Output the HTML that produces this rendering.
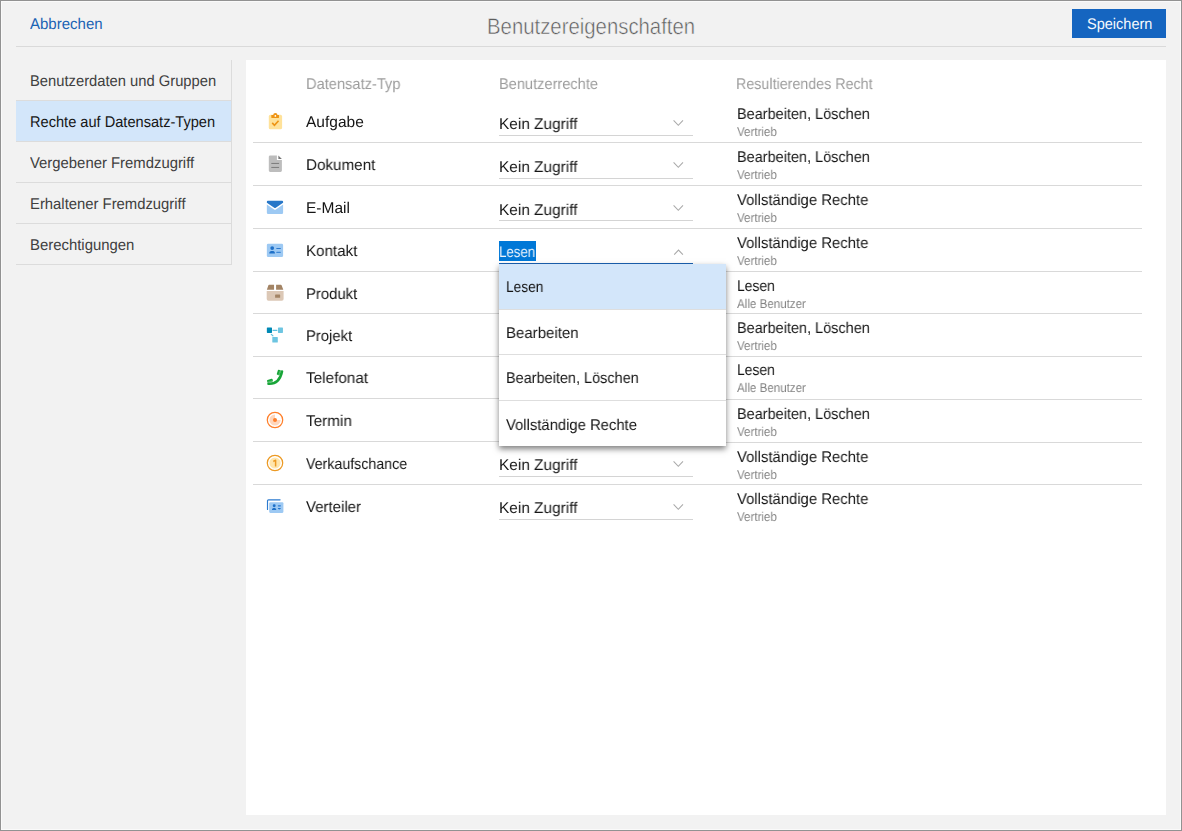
<!DOCTYPE html>
<html lang="de"><head><meta charset="utf-8"><title>Benutzereigenschaften</title><style>
html,body{margin:0;padding:0}
body{width:1182px;height:831px;overflow:hidden;background:#f2f2f2;font-family:"Liberation Sans",sans-serif;position:relative;color:#1f1f1f}
.frame{position:absolute;left:0;top:0;width:1182px;height:831px;box-shadow:inset 0 0 0 1px #929292,inset 0 0 0 2px #fafafa}
.a{position:absolute;white-space:nowrap;line-height:1}
.t{transform-origin:0 0;text-rendering:geometricPrecision}
.g{will-change:transform}
.hr{position:absolute;height:1px;background:#d9d9d9}
.navbg{position:absolute;left:16px;width:215px;height:1px;background:#dcdcdc}
.panel{position:absolute;left:246px;top:60px;width:920px;height:755px;background:#fff}
.btn{position:absolute;left:1072px;top:9px;width:94px;height:29px;background:#1565c0}
.ul{position:absolute;left:499px;width:194px;height:1px;background:#d4d4d4}
.pop{position:absolute;left:499px;top:264px;width:227px;height:182px;background:#fff;box-shadow:0 3px 6px rgba(0,0,0,.5)}
.ic{position:absolute;left:263px;width:24px;height:24px}
svg{display:block}
h1{margin:0;font-weight:normal}
</style></head><body>
<div class="frame"></div>
<header>
<span class="a t" style="left:30.20px;top:17.00px;font-size:15.5px;color:#1b63b4;transform:scaleX(0.9686);">Abbrechen</span>
<h1 class="a t" style="left:486.77px;top:16.00px;font-size:22.6px;color:#5e5e5e;transform:scaleX(0.9005);-webkit-text-stroke:0.5px #f2f2f2;">Benutzereigenschaften</h1>
<div class="btn"></div><span class="a t" style="left:1086.75px;top:17.00px;font-size:15.4px;color:#f6f9fd;transform:scaleX(0.9437);">Speichern</span>
<div class="hr" style="left:16px;top:46px;width:1150px;background:#dadada"></div>
</header>
<nav>
<div class="a" style="left:16px;top:101px;width:215px;height:40px;background:#d3e6fa"></div>
<div class="navbg" style="top:100px"></div>
<div class="navbg" style="top:141px"></div>
<div class="navbg" style="top:182px"></div>
<div class="navbg" style="top:223px"></div>
<div class="navbg" style="top:264px"></div>
<div class="a" style="left:231px;top:60px;width:1px;height:205px;background:#dcdcdc"></div>
<div class="a t" style="left:29.62px;top:74.00px;font-size:15.5px;color:#404040;transform:scaleX(0.9518);">Benutzerdaten und Gruppen</div>
<div class="a t" style="left:29.63px;top:115.00px;font-size:15.5px;color:#161616;transform:scaleX(0.9421);">Rechte auf Datensatz-Typen</div>
<div class="a t" style="left:30.00px;top:156.00px;font-size:15.5px;color:#404040;transform:scaleX(0.9591);">Vergebener Fremdzugriff</div>
<div class="a t" style="left:29.61px;top:197.00px;font-size:15.5px;color:#404040;transform:scaleX(0.9571);">Erhaltener Fremdzugriff</div>
<div class="a t" style="left:29.61px;top:238.00px;font-size:15.5px;color:#404040;transform:scaleX(0.9615);">Berechtigungen</div>
</nav>
<main>
<div class="panel"></div>
<div class="thead"><div class="a t g" style="left:306.43px;top:77.00px;font-size:15.5px;color:#9d9d9d;transform:scaleX(0.9454);">Datensatz-Typ</div><div class="a t g" style="left:498.53px;top:77.00px;font-size:15.5px;color:#9d9d9d;transform:scaleX(0.9415);">Benutzerrechte</div><div class="a t g" style="left:736.46px;top:77.00px;font-size:15.5px;color:#9d9d9d;transform:scaleX(0.9210);">Resultierendes Recht</div></div>
<section class="row">
<svg class="a" style="left:263px;top:109px" width="26" height="26" viewBox="0 0 26 26"><rect x="5.8" y="5.8" width="13.3" height="14.5" rx="1.6" fill="#ffe29a"/><path d="M8.3 5.9h7.7v2.6a.4.4 0 0 1-.4.4H8.7a.4.4 0 0 1-.4-.4z" fill="#ee9414"/><path d="M10.2 6.2a2.15 2.15 0 0 1 4.3 0z" fill="#ee9414"/><circle cx="12.35" cy="6.9" r="0.85" fill="#fff"/><path d="M9.2 13.9l2.25 2.35 4.1-4.45" fill="none" stroke="#ee9414" stroke-width="1.6"/></svg>
<div class="ul" style="top:135px"></div>
<svg class="a" style="left:672px;top:119px" width="13" height="9" viewBox="0 0 13 9"><path d="M1.6 1.4 L6.3 6.3 L11 1.4" fill="none" stroke="#a9a9a9" stroke-width="1.05"/></svg>
<div class="a t g" style="left:306.00px;top:115.00px;font-size:15.5px;color:#151515;transform:scaleX(0.9928);">Aufgabe</div>
<div class="a t g" style="left:498.97px;top:117.00px;font-size:15.5px;color:#151515;transform:scaleX(0.9927);">Kein Zugriff</div>
<div class="a t g" style="left:736.54px;top:107.00px;font-size:15.5px;color:#151515;transform:scaleX(0.9343);">Bearbeiten, Löschen</div>
<div class="a t g" style="left:737.00px;top:126.00px;font-size:12.8px;color:#858585;transform:scaleX(0.9040);">Vertrieb</div>
<div class="hr" style="left:253px;top:142px;width:889px"></div>
</section>
<section class="row">
<svg class="a" style="left:263px;top:151px" width="26" height="26" viewBox="0 0 26 26"><path d="M7.2 4.4h6.7v4.7h5v10.5a1.4 1.4 0 0 1-1.4 1.4H7.2a1.4 1.4 0 0 1-1.4-1.4V5.8a1.4 1.4 0 0 1 1.4-1.4z" fill="#bdbdbd"/><path d="M15.4 4.6l3.5 3.4h-3.5z" fill="#767676"/><path d="M8.3 12.45h7.8M8.3 16.45h7.8" stroke="#7c7c7c" stroke-width="1" fill="none"/></svg>
<div class="ul" style="top:178px"></div>
<svg class="a" style="left:672px;top:161px" width="13" height="9" viewBox="0 0 13 9"><path d="M1.6 1.4 L6.3 6.3 L11 1.4" fill="none" stroke="#a9a9a9" stroke-width="1.05"/></svg>
<div class="a t g" style="left:305.58px;top:158.00px;font-size:15.5px;color:#151515;transform:scaleX(0.9818);">Dokument</div>
<div class="a t g" style="left:498.97px;top:160.00px;font-size:15.5px;color:#151515;transform:scaleX(0.9927);">Kein Zugriff</div>
<div class="a t g" style="left:736.54px;top:150.00px;font-size:15.5px;color:#151515;transform:scaleX(0.9343);">Bearbeiten, Löschen</div>
<div class="a t g" style="left:737.00px;top:169.00px;font-size:12.8px;color:#858585;transform:scaleX(0.9040);">Vertrieb</div>
<div class="hr" style="left:253px;top:185px;width:889px"></div>
</section>
<section class="row">
<svg class="a" style="left:262px;top:194px" width="26" height="26" viewBox="0 0 26 26"><path d="M4.85 10.4l7.3 5.2a1.5 1.5 0 0 0 1.7 0l7.25-5.2v8.3a1.3 1.3 0 0 1-1.3 1.3H6.15a1.3 1.3 0 0 1-1.3-1.3z" fill="#9dc9f3"/><path d="M5.9 6.7h14.2a1 1 0 0 1 1 1v1.1l-7.3 5a1.4 1.4 0 0 1-1.6 0l-7.35-5V7.7a1 1 0 0 1 1.05-1z" fill="#2777c8"/></svg>
<div class="ul" style="top:220px"></div>
<svg class="a" style="left:672px;top:204px" width="13" height="9" viewBox="0 0 13 9"><path d="M1.6 1.4 L6.3 6.3 L11 1.4" fill="none" stroke="#a9a9a9" stroke-width="1.05"/></svg>
<div class="a t g" style="left:305.57px;top:201.00px;font-size:15.5px;color:#151515;transform:scaleX(0.9948);">E-Mail</div>
<div class="a t g" style="left:498.97px;top:203.00px;font-size:15.5px;color:#151515;transform:scaleX(0.9927);">Kein Zugriff</div>
<div class="a t g" style="left:736.90px;top:193.00px;font-size:15.5px;color:#151515;transform:scaleX(0.9584);">Vollständige Rechte</div>
<div class="a t g" style="left:737.00px;top:212.00px;font-size:12.8px;color:#858585;transform:scaleX(0.9040);">Vertrieb</div>
<div class="hr" style="left:253px;top:228px;width:889px"></div>
</section>
<section class="row">
<svg class="a" style="left:262px;top:237px" width="26" height="26" viewBox="0 0 26 26"><rect x="4.85" y="6.7" width="16.25" height="13.3" rx="1.3" fill="#9dc9f3"/><circle cx="10.2" cy="11.1" r="1.9" fill="#1e70c8"/><path d="M7.3 16.4v-.5c0-1.3 1.3-1.9 2.9-1.9s2.7.6 2.7 1.9v.5z" fill="#1e70c8"/><path d="M14.8 11.5h3.5" stroke="#2a78ce" stroke-width="1.15" stroke-linecap="round" fill="none"/><path d="M14.8 15.3h3.5" stroke="#3f88d7" stroke-width="1.25" stroke-linecap="round" fill="none"/></svg>
<div class="a" style="left:499px;top:241px;width:37px;height:20px;background:#0078d7"></div>
<div class="ul" style="top:263px;height:2px;background:#1b63b4"></div>
<svg class="a" style="left:672px;top:248px" width="13" height="9" viewBox="0 0 13 9"><path d="M2.2 6.7 L6.5 2.1 L10.9 6.7" fill="none" stroke="#a9a9a9" stroke-width="1.05"/></svg>
<div class="a t g" style="left:305.59px;top:244.00px;font-size:15.5px;color:#151515;transform:scaleX(0.9770);">Kontakt</div>
<div class="a t g" style="left:499.23px;top:245.00px;font-size:15.4px;color:#eef4fb;transform:scaleX(0.8646);">Lesen</div>
<div class="a t g" style="left:736.90px;top:236.00px;font-size:15.5px;color:#151515;transform:scaleX(0.9584);">Vollständige Rechte</div>
<div class="a t g" style="left:737.00px;top:255.00px;font-size:12.8px;color:#858585;transform:scaleX(0.9040);">Vertrieb</div>
<div class="hr" style="left:253px;top:271px;width:889px"></div>
</section>
<section class="row">
<svg class="a" style="left:262px;top:280px" width="26" height="26" viewBox="0 0 26 26"><path d="M7.1 4.7h4.95v5.15h-7.2l1.55-4.6a.8.8 0 0 1 .7-.55z" fill="#a38465"/><path d="M14.1 4.7h4.8a.8.8 0 0 1 .7.55l1.7 4.6h-7.2z" fill="#a38465"/><path d="M4.7 10.95h16.9v8.1a1.75 1.75 0 0 1-1.75 1.75H6.45a1.75 1.75 0 0 1-1.75-1.75z" fill="#dcc8b6"/><rect x="13.1" y="14.55" width="5.05" height="3.25" rx=".4" fill="#a38465"/></svg>
<div class="a t g" style="left:305.61px;top:287.00px;font-size:15.5px;color:#151515;transform:scaleX(0.9610);">Produkt</div>
<div class="a t g" style="left:736.59px;top:279.00px;font-size:15.5px;color:#151515;transform:scaleX(0.8965);">Lesen</div>
<div class="a t g" style="left:737.00px;top:298.00px;font-size:12.8px;color:#858585;transform:scaleX(0.9057);">Alle Benutzer</div>
<div class="hr" style="left:253px;top:313px;width:889px"></div>
</section>
<section class="row">
<svg class="a" style="left:262px;top:322px" width="26" height="26" viewBox="0 0 26 26"><rect x="4.85" y="5.5" width="5.15" height="5.45" rx=".6" fill="#0089b5"/><rect x="15.95" y="5.5" width="5" height="5.45" rx=".6" fill="#6dc5e1"/><rect x="10.3" y="15" width="5.5" height="5.5" rx=".6" fill="#6dc5e1"/><path d="M11 8.3h3.9M9.3 12.4l1.6 1.4" stroke="#5fbfdd" stroke-width="1.15" stroke-linecap="round" fill="none"/></svg>
<div class="a t g" style="left:305.61px;top:329.00px;font-size:15.5px;color:#151515;transform:scaleX(0.9562);">Projekt</div>
<div class="a t g" style="left:736.54px;top:321.00px;font-size:15.5px;color:#151515;transform:scaleX(0.9343);">Bearbeiten, Löschen</div>
<div class="a t g" style="left:737.00px;top:340.00px;font-size:12.8px;color:#858585;transform:scaleX(0.9040);">Vertrieb</div>
<div class="hr" style="left:253px;top:356px;width:889px"></div>
</section>
<section class="row">
<svg class="a" style="left:262px;top:365px" width="26" height="26" viewBox="0 0 26 26"><path d="M6.5 18.75Q17.3 19.4 20 6.5" fill="none" stroke="#18a538" stroke-width="2.6" stroke-linecap="round"/><rect x="-1.55" y="-2.6" width="3.1" height="5.2" rx=".8" transform="translate(16.85 7.45) rotate(17)" fill="#18a538"/><rect x="-2.9" y="-1.45" width="5.8" height="2.9" rx=".8" transform="translate(8 15.75) rotate(-19)" fill="#18a538"/><path d="M18.35 5.4l-1.7 4.9M5.8 17.15l5-1.45" stroke="#86d499" stroke-width=".55" fill="none"/></svg>
<div class="a t g" style="left:305.69px;top:371.00px;font-size:15.5px;color:#151515;transform:scaleX(0.9879);">Telefonat</div>
<div class="a t g" style="left:736.59px;top:363.00px;font-size:15.5px;color:#151515;transform:scaleX(0.8965);">Lesen</div>
<div class="a t g" style="left:737.00px;top:382.00px;font-size:12.8px;color:#858585;transform:scaleX(0.9057);">Alle Benutzer</div>
<div class="hr" style="left:253px;top:398px;width:359px"></div>
<div class="hr" style="left:612px;top:399px;width:530px"></div>
</section>
<section class="row">
<svg class="a" style="left:262px;top:407px" width="26" height="26" viewBox="0 0 26 26"><circle cx="13" cy="13" r="7.7" fill="#fff" stroke="#ff7f2a" stroke-width="1.25"/><path d="M13 13V7.4A5.6 5.6 0 1 0 18.6 13z" fill="#ffd6bc"/><circle cx="13" cy="13" r="2" fill="#ff7f2a"/></svg>
<div class="a t g" style="left:305.69px;top:414.00px;font-size:15.5px;color:#151515;transform:scaleX(0.9856);">Termin</div>
<div class="a t g" style="left:736.54px;top:407.00px;font-size:15.5px;color:#151515;transform:scaleX(0.9343);">Bearbeiten, Löschen</div>
<div class="a t g" style="left:737.00px;top:426.00px;font-size:12.8px;color:#858585;transform:scaleX(0.9040);">Vertrieb</div>
<div class="hr" style="left:253px;top:441px;width:359px"></div>
<div class="hr" style="left:612px;top:442px;width:530px"></div>
</section>
<section class="row">
<svg class="a" style="left:262px;top:450px" width="26" height="26" viewBox="0 0 26 26"><circle cx="13" cy="13" r="7.7" fill="#fff" stroke="#ec9a24" stroke-width="1.25"/><circle cx="13" cy="13" r="5.6" fill="#ffe6ad"/><path d="M11.3 11.5l2.3-1.3v6.3" fill="none" stroke="#ec9a24" stroke-width="1.5" stroke-linejoin="round"/></svg>
<div class="ul" style="top:476px"></div>
<svg class="a" style="left:672px;top:460px" width="13" height="9" viewBox="0 0 13 9"><path d="M1.6 1.4 L6.3 6.3 L11 1.4" fill="none" stroke="#a9a9a9" stroke-width="1.05"/></svg>
<div class="a t g" style="left:306.00px;top:457.00px;font-size:15.5px;color:#151515;transform:scaleX(0.9165);">Verkaufschance</div>
<div class="a t g" style="left:498.97px;top:458.00px;font-size:15.5px;color:#151515;transform:scaleX(0.9927);">Kein Zugriff</div>
<div class="a t g" style="left:736.90px;top:450.00px;font-size:15.5px;color:#151515;transform:scaleX(0.9584);">Vollständige Rechte</div>
<div class="a t g" style="left:737.00px;top:469.00px;font-size:12.8px;color:#858585;transform:scaleX(0.9040);">Vertrieb</div>
<div class="hr" style="left:253px;top:484px;width:889px"></div>
</section>
<section class="row">
<svg class="a" style="left:262px;top:493px" width="26" height="26" viewBox="0 0 26 26"><path d="M5.5 16.4V7.8a1 1 0 0 1 1-1H18.1" fill="none" stroke="#2d7bd0" stroke-width="1.15" stroke-linecap="round"/><rect x="7.2" y="9.2" width="14.2" height="10.7" rx="1.1" fill="#9dc9f3"/><circle cx="12.2" cy="12.8" r="1.45" fill="#1e70c8"/><path d="M10 16.9v-.4c0-1 1-1.5 2.1-1.5s2.1.5 2.1 1.5v.4z" fill="#1e70c8"/><path d="M16.4 12.8h1.9" stroke="#2d7bd0" stroke-width="1.35" stroke-linecap="round" fill="none"/><path d="M15.8 15.1h3a1.5 1.3 0 0 1-3 0z" fill="#2273cb"/></svg>
<div class="ul" style="top:519px"></div>
<svg class="a" style="left:672px;top:503px" width="13" height="9" viewBox="0 0 13 9"><path d="M1.6 1.4 L6.3 6.3 L11 1.4" fill="none" stroke="#a9a9a9" stroke-width="1.05"/></svg>
<div class="a t g" style="left:306.00px;top:500.00px;font-size:15.5px;color:#151515;transform:scaleX(0.9672);">Verteiler</div>
<div class="a t g" style="left:498.97px;top:501.00px;font-size:15.5px;color:#151515;transform:scaleX(0.9927);">Kein Zugriff</div>
<div class="a t g" style="left:736.90px;top:492.00px;font-size:15.5px;color:#151515;transform:scaleX(0.9584);">Vollständige Rechte</div>
<div class="a t g" style="left:737.00px;top:511.00px;font-size:12.8px;color:#858585;transform:scaleX(0.9040);">Vertrieb</div>
</section>
</main>
<div class="pop" role="listbox"><div class="a" style="left:0;top:0;width:227px;height:45px;background:#d3e6fa"></div>
<div class="hr" style="left:0;top:45px;width:227px;background:#dedede"></div>
<div class="hr" style="left:0;top:90px;width:227px;background:#dedede"></div>
<div class="hr" style="left:0;top:136px;width:227px;background:#dedede"></div>
<div class="a t g" style="left:6.80px;top:16.00px;font-size:15.5px;color:#151515;transform:scaleX(0.8865);">Lesen</div>
<div class="a t g" style="left:6.70px;top:62.00px;font-size:15.5px;color:#151515;transform:scaleX(0.9686);">Bearbeiten</div>
<div class="a t g" style="left:6.74px;top:107.00px;font-size:15.5px;color:#151515;transform:scaleX(0.9336);">Bearbeiten, Löschen</div>
<div class="a t g" style="left:7.10px;top:154.00px;font-size:15.5px;color:#151515;transform:scaleX(0.9555);">Vollständige Rechte</div>
</div>
</body></html>
